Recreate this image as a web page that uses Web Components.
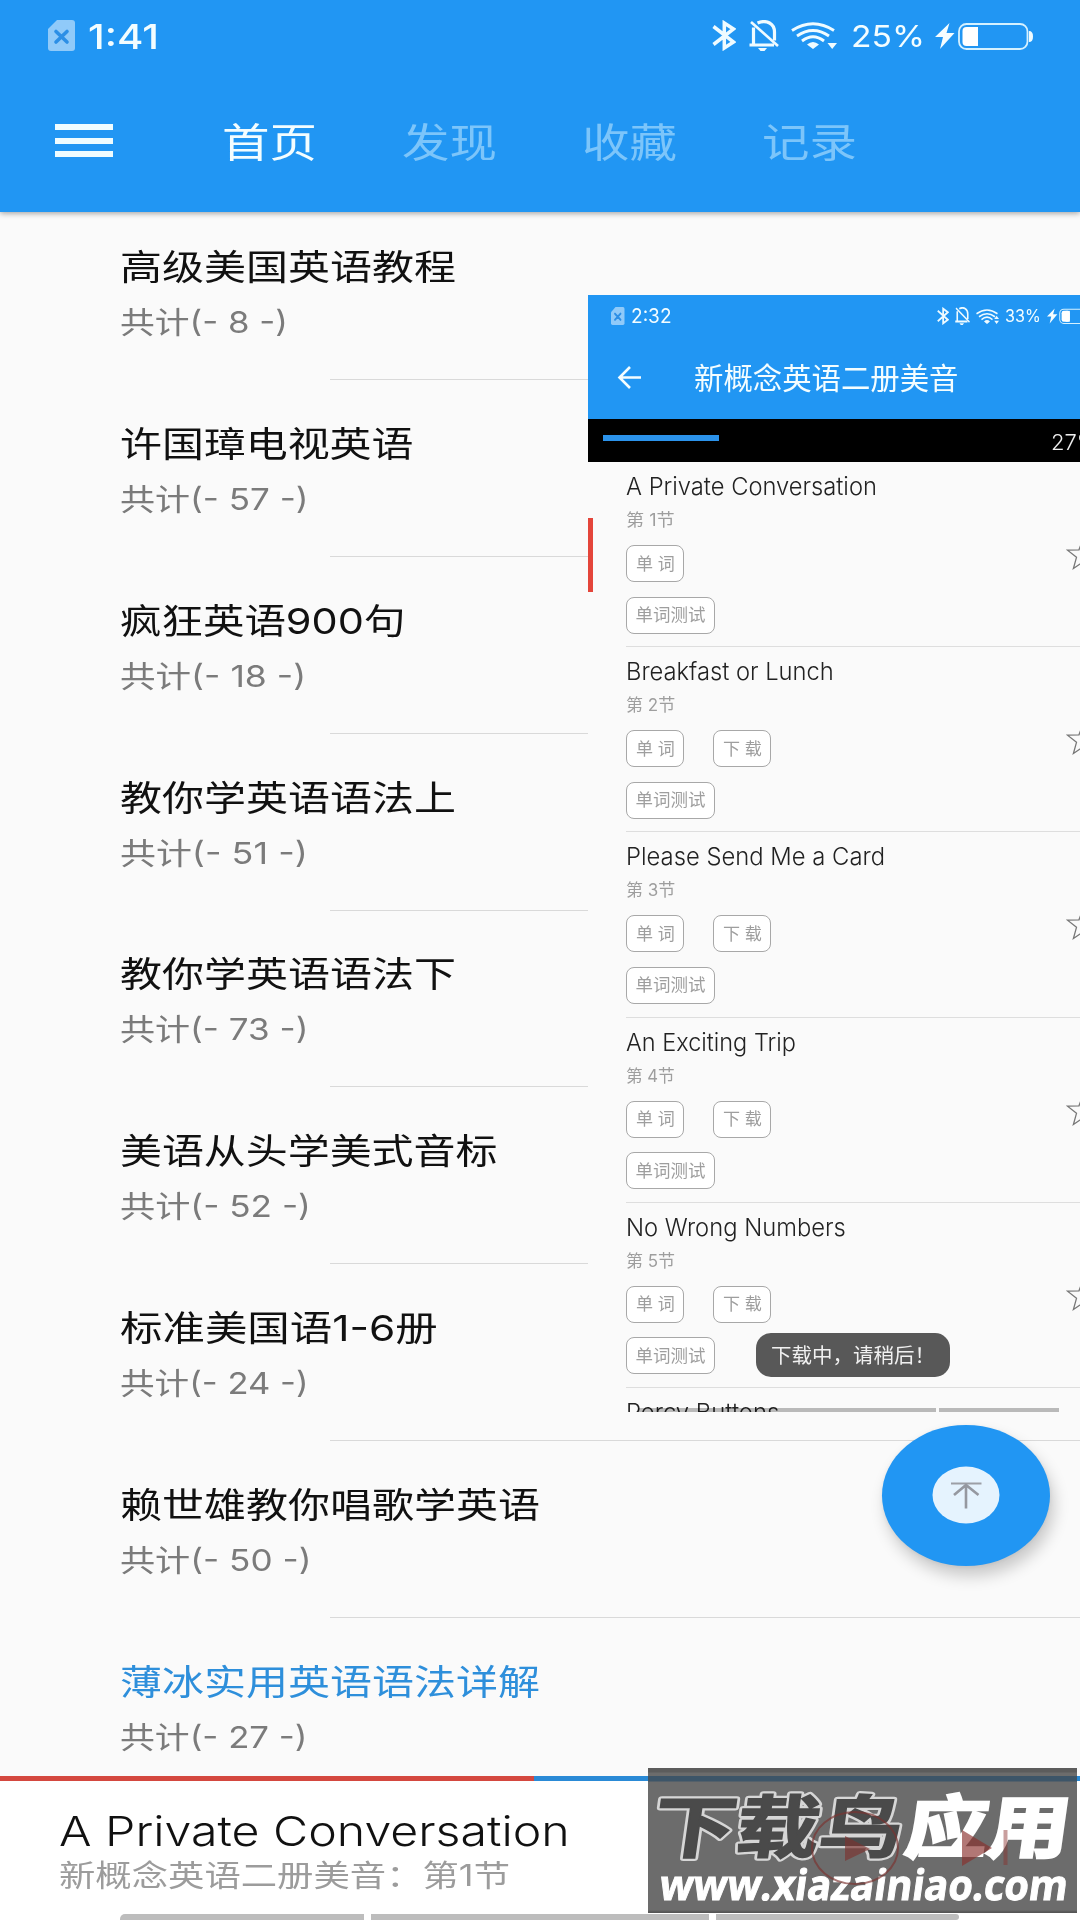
<!DOCTYPE html>
<html lang="zh-CN">
<head>
<meta charset="utf-8">
<title>首页</title>
<style>
html, body {
  margin: 0;
  height: 1920px;
  width: 1080px;
  overflow: hidden;
  background: #fafafa;
  color: #111;
  font-family: Inter, "Noto Sans CJK SC", sans-serif;
  font-weight: 400;
}
</style>
</head>
<body>
<home-page></home-page>

<script>
const define = (name, markup, setup) => {
  const template = document.createElement("template");
  template.innerHTML = markup;
  customElements.define(name, class extends HTMLElement {
    constructor() {
      super();
      this.attachShadow({mode: "open"});
      this.shadowRoot.appendChild(template.content.cloneNode(true));
    }

    connectedCallback() {
      if (setup) setup(this, this.shadowRoot);
    }
  });
};

// One line of text, stretched sideways until it is exactly `w` pixels wide.
define("fit-text", `
<style>
:host {
  display: flex;
  flex: none;
}
span {
  flex: none;
  white-space: pre;
  transform-origin: 0 50%;
}
</style>
<span></span>
`, (host, root) => {
  const span = root.querySelector("span");
  const w = Number(host.getAttribute("w"));
  const h = host.getAttribute("h");
  span.textContent = host.getAttribute("text");
  host.style.fontSize = host.getAttribute("size") + "px";
  host.style.width = w + "px";
  host.style.height = h + "px";
  host.style.lineHeight = h + "px";
  span.style.transform = `scaleX(${w / span.offsetWidth})`;
});

define("sim-icon", `
<style>
:host { display: block; flex: none; }
svg { display: block; width: 100%; height: 100%; }
</style>
<svg viewBox="0 0 27 31" preserveAspectRatio="none">
  <path d="M9 0H24a3 3 0 0 1 3 3V28a3 3 0 0 1-3 3H3a3 3 0 0 1-3-3V9z" fill="#90caf9"/>
  <path d="M8 11.500l11 10.500M19 11.500l-11 10.500" stroke="#2c8fe6" stroke-width="3.600" stroke-linecap="round"/>
</svg>
`);

define("bluetooth-icon", `
<style>
:host { display: block; flex: none; }
svg { display: block; width: 100%; height: 100%; }
</style>
<svg viewBox="0 0 24 31" preserveAspectRatio="none">
  <path d="M1.500 6.500L21.500 22L12.300 28V3L21.500 9L1.500 24.500" fill="none" stroke="#effbff" stroke-width="3.500"/>
</svg>
`);

define("bell-off-icon", `
<style>
:host { display: block; flex: none; }
svg { display: block; width: 100%; height: 100%; }
</style>
<svg viewBox="0 0 30 31" preserveAspectRatio="none" fill="none" stroke="#effbff" stroke-width="3.200">
  <path d="M4.500 7.500V24.500M0.500 25H25M8.500 3C18-1 25.500 4 25.500 12V20.500"/>
  <path d="M2 2L29 26" stroke-width="2.600"/>
  <path d="M9 28H18L15.500 31H11.500z" fill="#effbff" stroke="none"/>
</svg>
`);

define("wifi-icon", `
<style>
:host { display: block; flex: none; }
svg { display: block; width: 100%; height: 100%; }
.up { display: none; }
:host([updown]) .up { display: block; }
</style>
<svg viewBox="0 0 46 27" preserveAspectRatio="none" fill="none" stroke="#effbff" stroke-width="2.900">
  <path d="M1 8.500Q22 -5 43 8.500M6 14Q22 3 38 14M11 19Q22 10.500 33 19"/>
  <path d="M16 22.500Q22 17.500 28 22.500L22 27zM36.500 21H46L41.200 27z" fill="#effbff" stroke="none"/>
  <path class="up" d="M36.500 18H46L41.200 12z" fill="#effbff" stroke="none"/>
</svg>
`);

define("battery-icon", `
<style>
:host { display: block; flex: none; }
svg { display: block; width: 100%; height: 100%; }
</style>
<svg viewBox="0 0 98 28" preserveAspectRatio="none">
  <path d="M14.500 1L0 15H8L5 27L19.500 11H11.500z" fill="#f5fdff"/>
  <rect x="24" y="2" width="68.500" height="25" rx="7.500" fill="none" stroke="#d5f1ff" stroke-width="1.800"/>
  <path d="M94 9q4 0 4 5.500t-4 5.500z" fill="#effbff"/>
  <rect x="27.500" y="5" width="15.500" height="19" rx="4" fill="#fff"/>
  <rect x="35" y="5" width="8" height="19" fill="#fff"/>
</svg>
`);

define("app-header", `
<style>
:host {
  display: flex;
  flex-direction: column;
  flex: none;
  height: 212px;
  position: relative;
  z-index: 1;
  background: #2196f3;
  box-shadow: 0 1px 6px rgba(0, 0, 0, .4);
  color: #f3fdff;
}
.status {
  display: flex;
  align-items: center;
  height: 71px;
  padding-left: 48px;
}
sim-icon { width: 27px; height: 31px; margin-right: 13px; }
.time { font-weight: 500; padding-top: 3px; }
.spacer { flex: 1; }
bluetooth-icon { width: 24px; height: 31px; margin-right: 13px; }
bell-off-icon { width: 30px; height: 31px; margin-right: 12px; }
wifi-icon { width: 46px; height: 27px; margin-right: 14px; }
battery-icon { width: 98px; height: 28px; margin: 0 47px 0 10px; }
nav {
  display: flex;
  align-items: center;
  height: 141px;
  padding: 0 0 2px 55px;
  box-sizing: border-box;
}
.menu {
  display: flex;
  flex-direction: column;
  gap: 7.500px;
  width: 58px;
  margin-right: 109px;
}
.menu i { height: 6px; background: #effcff; }
.tabs { display: flex; gap: 85px; padding-top: 5px; }
.tabs fit-text { color: #7cc5fa; }
.tabs .active { color: #f3fdff; }
</style>
<div class="status">
  <sim-icon></sim-icon>
  <fit-text class="time" text="1:41" size="34" w="71" h="40"></fit-text>
  <div class="spacer"></div>
  <bluetooth-icon></bluetooth-icon>
  <bell-off-icon></bell-off-icon>
  <wifi-icon></wifi-icon>
  <fit-text text="25%" size="30" w="74" h="40"></fit-text>
  <battery-icon></battery-icon>
</div>
<nav>
  <div class="menu"><i></i><i></i><i></i></div>
  <div class="tabs">
    <fit-text class="active" text="首页" size="40" w="95" h="56"></fit-text>
    <fit-text text="发现" size="40" w="95" h="56"></fit-text>
    <fit-text text="收藏" size="40" w="95" h="56"></fit-text>
    <fit-text text="记录" size="40" w="95" h="56"></fit-text>
  </div>
</nav>
`);

define("course-row", `
<style>
:host {
  display: flex;
  flex-direction: column;
  flex: none;
  box-sizing: border-box;
  height: 176.800px;
  padding: 39.800px 0 0 120px;
  color: #111;
}
:host([current]) .title { color: #2e8fdb; }
.count { color: #7b7b7b; margin-top: 7px; }
hr {
  width: 750px;
  height: 1px;
  margin: auto 0 0 210px;
  border: 0;
  background: #d9d9d9;
}
</style>
<div class="title"></div>
<div class="count"></div>
<hr>
`, (host, root) => {
  const line = (text, w, size, h) =>
    `<fit-text text="${text}" w="${w}" size="${size}" h="${h}"></fit-text>`;
  const get = name => host.getAttribute(name);
  root.querySelector(".title").innerHTML = line(get("name"), get("w"), 35.5, 50);
  root.querySelector(".count").innerHTML = line(`共计(- ${get("count")} -)`, get("cw"), 30, 44);
});

define("course-list", `
<style>
:host {
  display: flex;
  flex-direction: column;
  flex: 1;
  min-height: 0;
  overflow: hidden;
}
::slotted(:first-child) { margin-top: -8.500px; }
</style>
<slot></slot>
`);

define("player-bar", `
<style>
:host {
  display: flex;
  flex-direction: column;
  flex: none;
  height: 144.500px;
  background: #fff;
}
.progress { height: 5.500px; background: linear-gradient(90deg, #d4483f 534px, #2a8ad6 534px); }
.name { margin: 20px 0 0 59px; color: #111; font-weight: 300; }
.lesson { margin: 0 0 0 59px; color: #9c9c9c; }
.home { display: flex; gap: 7px; margin: auto 0 0 120px; }
.home i { height: 6px; background: #bdbdbd; }
.home i:first-child { border-radius: 5px 0 0 0; }
.home i:last-child { border-radius: 0 4px 4px 0; }
</style>
<div class="progress"></div>
<fit-text class="name" text="A Private Conversation" size="41" w="511" h="60"></fit-text>
<fit-text class="lesson" text="新概念英语二册美音：第1节" size="29.500" w="451" h="28"></fit-text>
<div class="home">
  <i style="width:244px"></i><i style="width:338px"></i><i style="width:243px"></i>
</div>
`);

define("lesson-row", `
<style>
:host {
  display: flex;
  flex: none;
  box-sizing: border-box;
  height: 185.200px;
  width: 560px;
  margin-left: 38px;
  border-bottom: 1px solid #dedede;
}
.main { width: 440px; }
.title { padding: 9px 0 0 0; color: #222; font-weight: 300; }
.part { color: #9e9e9e; margin-top: 1px; }
.chips { display: flex; gap: 29px; margin-top: 9px; }
.chips + .chips { margin-top: 14.500px; }
.chip {
  display: flex;
  align-items: center;
  justify-content: center;
  box-sizing: border-box;
  height: 37px;
  width: 58px;
  border: 1px solid #a8a8a8;
  border-radius: 8px;
  background: #fff;
  color: #9e9e9e;
}
.wide { width: 89px; }
:host(:not([download])) .download { display: none; }
svg { width: 36px; height: 34px; margin: 75px 0 0 -1.500px; flex: none; }
</style>
<div class="main">
  <div class="title"></div>
  <div class="part"></div>
  <div class="chips">
    <div class="chip"><fit-text text="单 词" size="17.500" w="39" h="26"></fit-text></div>
    <div class="chip download"><fit-text text="下 载" size="17.500" w="39" h="26"></fit-text></div>
  </div>
  <div class="chips">
    <div class="chip wide"><fit-text text="单词测试" size="17.500" w="70" h="26"></fit-text></div>
  </div>
</div>
<svg viewBox="0 0 36 34"><path d="M18 2L22 12.800L33.500 13.200L24.500 20.300L27.600 31.500L18 25L8.400 31.500L11.500 20.300L2.500 13.200L14 12.800z" fill="none" stroke="#777" stroke-width="1.300"/></svg>
`, (host, root) => {
  const get = name => host.getAttribute(name);
  root.querySelector(".title").innerHTML =
    `<fit-text text="${get("name")}" w="${get("w")}" size="24.200" h="32"></fit-text>`;
  root.querySelector(".part").innerHTML =
    `<fit-text text="第 ${get("no")}节" w="49" size="17" h="32"></fit-text>`;
});

// The second phone screen, cut off at the right edge of the page.
define("lesson-screen", `
<style>
:host {
  display: flex;
  flex-direction: column;
  overflow: hidden;
  background: #fafafa;
}
header {
  flex: none;
  height: 123.500px;
  background: #2196f3;
  color: #f3fdff;
}
.status {
  display: flex;
  align-items: center;
  height: 42px;
  padding-left: 23px;
}
sim-icon { width: 13.500px; height: 18px; margin-right: 6px; }
bluetooth-icon { width: 12px; height: 18px; margin: 0 6px 0 265px; }
bell-off-icon { width: 15px; height: 18px; margin-right: 6px; }
wifi-icon { width: 23px; height: 15px; margin-right: 6px; }
battery-icon { width: 52px; height: 16px; margin-left: 6px; }
time { display: block; width: 41px; }
.bar {
  display: flex;
  align-items: center;
  height: 81.500px;
  padding-left: 29px;
}
.bar fit-text { padding-top: 2px; }
.back { width: 25px; height: 25px; margin-right: 52px; }
.loading {
  display: flex;
  flex: none;
  height: 43.500px;
  background: #000;
  color: #eee;
}
.loading i {
  flex: none;
  width: 116px;
  height: 6px;
  margin: 16px 332px 0 15px;
  background: #2b92ea;
}
.loading fit-text { margin-top: 6px; font-weight: 300; }
.mark { position: absolute; left: 0; top: 223px; width: 5px; height: 74px; background: #e4453a; }
.home { position: absolute; left: 50px; bottom: 0; display: flex; gap: 3px; mix-blend-mode: multiply; }
.home i { height: 4px; background: #bdbdbd; }
.toast {
  position: absolute;
  left: 168px;
  top: 1037.500px;
  display: flex;
  align-items: center;
  height: 44px;
  width: 194px;
  padding: 2px 0 0 15px;
  box-sizing: border-box;
  border-radius: 15px;
  background: #585858;
  color: #f0f0f0;
}
.last { flex: none; margin: 9px 0 0 38px; color: #222; font-weight: 300; }
</style>
<header>
  <div class="status">
    <sim-icon></sim-icon>
    <time><fit-text text="2:32" size="20" w="41" h="26"></fit-text></time>
    <bluetooth-icon></bluetooth-icon>
    <bell-off-icon></bell-off-icon>
    <wifi-icon updown></wifi-icon>
    <fit-text text="33%" size="17" w="36" h="26"></fit-text>
    <battery-icon></battery-icon>
  </div>
  <div class="bar">
    <svg class="back" viewBox="0 0 25 25"><path d="M13 2L2.500 12.500L13 23M2.500 12.500H24" fill="none" stroke="#f3fdff" stroke-width="2.600"/></svg>
    <fit-text text="新概念英语二册美音" size="29.400" w="265" h="44"></fit-text>
  </div>
</header>
<div class="loading"><i></i><fit-text text="27%" size="22" w="46" h="34"></fit-text></div>
<lesson-row name="A Private Conversation" w="251" no="1"></lesson-row>
<lesson-row name="Breakfast or Lunch" w="208" no="2" download></lesson-row>
<lesson-row name="Please Send Me a Card" w="259" no="3" download></lesson-row>
<lesson-row name="An Exciting Trip" w="170" no="4" download></lesson-row>
<lesson-row name="No Wrong Numbers" w="220" no="5" download></lesson-row>
<fit-text class="last" text="Percy Buttons" size="24.200" w="153" h="32"></fit-text>
<div class="mark"></div>
<div class="home"><i style="width:298px"></i><i style="width:120px"></i></div>
<div class="toast"><fit-text text="下载中，请稍后！" size="20.500" w="164" h="30"></fit-text></div>
`);

define("top-button", `
<style>
:host {
  display: block;
  border-radius: 50%;
  background: #2196f3;
  box-shadow: 4px 10px 16px rgba(0, 0, 0, .2), 0 1px 4px rgba(0, 0, 0, .06);
}
svg { display: block; }
</style>
<svg width="168" height="141" viewBox="0 0 168 141">
  <ellipse cx="84" cy="70" rx="33.500" ry="28.500" fill="#e5f3fe"/>
  <path d="M69 58.500H99.500" stroke="#9c9fa6" stroke-width="2"/>
  <path d="M84 59V83.500M72 70L84 60L96.500 70" fill="none" stroke="#9598a0" stroke-width="2.600"/>
</svg>
`);

define("site-stamp", `
<style>
:host {
  display: block;
  background: linear-gradient(#5c5c5c 4px, #6c6c6c 5px, #6c6c6c 142px, #555 144px);
}
svg { display: block; }
</style>
<svg width="429" height="145" viewBox="0 0 429 145">
  <rect y="8" width="429" height="5.500" fill="#3d5568"/>
  <g font-family="Noto Sans CJK SC" font-weight="700" font-size="68" transform="translate(0 84) skewX(-8)">
    <text x="2" y="0" textLength="250" lengthAdjust="spacingAndGlyphs" fill="none" stroke="#d6d6d6" stroke-width="6" stroke-linejoin="round">下载鸟</text>
    <text x="2" y="0" textLength="250" lengthAdjust="spacingAndGlyphs" fill="#4a4a4a" stroke="#4a4a4a" stroke-width="1.500" aria-hidden="true">下载鸟</text>
    <text x="255" y="0" textLength="164" lengthAdjust="spacingAndGlyphs" fill="#fff" stroke="#fff" stroke-width="3">应用</text>
  </g>
  <text x="10" y="0" transform="translate(0 132) skewX(-8)" textLength="408" lengthAdjust="spacingAndGlyphs" font-family="Open Sans" font-weight="700" font-size="42" fill="#fff" stroke="#fff">www.xiazainiao.com</text>
  <g opacity=".65">
    <ellipse cx="207" cy="80" rx="43" ry="36" fill="none" stroke="#7c322f" stroke-width="2"/>
    <path d="M197 68L222 81L197 93z" fill="#7c322f"/>
    <path d="M314 62L344 80L314 98z" fill="#8a2f2c"/>
    <path d="M357.500 62V97" stroke="#8a2f2c" stroke-width="4" opacity=".7"/>
  </g>
</svg>
`);

define("home-page", `
<style>
:host {
  display: flex;
  flex-direction: column;
  position: relative;
  height: 1920px;
  width: 1080px;
  overflow: hidden;
}
lesson-screen { position: absolute; left: 588px; top: 295px; width: 492px; height: 1117px; }
top-button { position: absolute; left: 882px; top: 1425px; width: 168px; height: 141px; }
site-stamp { position: absolute; left: 648px; top: 1768px; width: 429px; height: 145px; }
</style>
<app-header></app-header>
<course-list>
  <course-row name="高级美国英语教程" w="336" count="8" cw="168"></course-row>
  <course-row name="许国璋电视英语" w="294" count="57" cw="189"></course-row>
  <course-row name="疯狂英语900句" w="285" count="18" cw="186"></course-row>
  <course-row name="教你学英语语法上" w="336" count="51" cw="188"></course-row>
  <course-row name="教你学英语语法下" w="336" count="73" cw="188"></course-row>
  <course-row name="美语从头学美式音标" w="378" count="52" cw="191"></course-row>
  <course-row name="标准美国语1-6册" w="318" count="24" cw="189"></course-row>
  <course-row name="赖世雄教你唱歌学英语" w="420" count="50" cw="192"></course-row>
  <course-row name="薄冰实用英语语法详解" w="420" count="27" cw="188" current></course-row>
</course-list>
<player-bar></player-bar>
<lesson-screen></lesson-screen>
<top-button></top-button>
<site-stamp></site-stamp>
`);
</script>
</body>
</html>
